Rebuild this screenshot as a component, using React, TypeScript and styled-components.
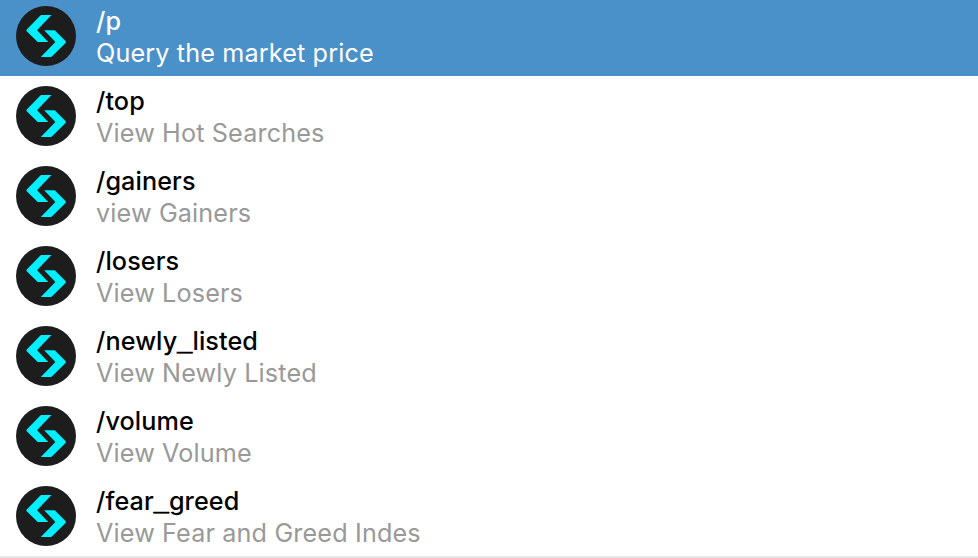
import React from 'react';
import styled, { createGlobalStyle } from 'styled-components';

const GlobalStyle = createGlobalStyle`
  * { box-sizing: border-box; }
  body { margin: 0; background: #fff; overflow: hidden; font-family: Inter, sans-serif; }
`;

const CommandList = styled.ul`
  display: flex;
  flex-direction: column;
  gap: 4px;
  width: 978px;
  height: 558px;
  margin: 0;
  padding: 0;
  list-style: none;
  border-bottom: 2px solid #e7e7e7;
`;

const CommandRow = styled.li<{ $active: boolean }>`
  display: flex;
  flex: 0 0 76px;
  gap: 20px;
  padding: 6px 16px 0;
  color: ${(p) => (p.$active ? '#fff' : '#000')};
  background: ${(p) => (p.$active ? '#4b91c9' : 'transparent')};
`;

const Avatar = styled.svg`
  flex: none;
  width: 60px;
  height: 60px;
`;

const CommandText = styled.div`
  display: flex;
  flex-direction: column;
  margin-top: -1px;
  font-size: 25.2px;
  line-height: 32px;
  white-space: nowrap;
`;

const CommandName = styled.span`
  height: 32px;
  font-weight: 500;
  letter-spacing: 0.1px;
`;

const Underscore = styled.span`
  font-family: "Liberation Sans", sans-serif;
  font-size: 27px;
  font-weight: 700;
  line-height: 0;
  vertical-align: 0.5px;
  -webkit-text-stroke: 0.7px currentColor;
`;

const Description = styled.span<{ $active: boolean }>`
  height: 32px;
  letter-spacing: 0.14px;
  color: ${(p) => (p.$active ? '#fff' : '#999')};
`;

const commands = [
  ['/p', 'Query the market price'],
  ['/top', 'View Hot Searches'],
  ['/gainers', 'view Gainers'],
  ['/losers', 'View Losers'],
  ['/newly_listed', 'View Newly Listed'],
  ['/volume', 'View Volume'],
  ['/fear_greed', 'View Fear and Greed Indes'],
];

const BotAvatar = () => (
  <Avatar viewBox="0 0 60 60" aria-hidden="true">
    <circle cx="30" cy="30" r="30" fill="#1d1d1d" />
    <path
      fill="#00f0ff"
      d="M25.4 9H35.5L21 24.3L32.2 36H21.7L10.7 25.2Q9.8 24.3 10.7 23.4L24.4 9.5Q24.8 9 25.4 9Z"
    />
    <path
      fill="#00f0ff"
      d="M28.2 24.2H38.7L49.5 35.1Q50.4 36 49.5 36.9L35.9 50.6Q35.5 51 34.9 51H24.8L39.4 36Z"
    />
  </Avatar>
);

const CommandLabel = ({ name }: { name: string }) => (
  <CommandName>
    {name.split('_').map((part, index) => (
      <React.Fragment key={part}>
        {index > 0 && <Underscore>_</Underscore>}
        {part}
      </React.Fragment>
    ))}
  </CommandName>
);

export default function App() {
  return (
    <>
      <GlobalStyle />
      <CommandList>
        {commands.map(([name, description], index) => (
          <CommandRow key={name} $active={index === 0}>
            <BotAvatar />
            <CommandText>
              <CommandLabel name={name} />
              <Description $active={index === 0}>{description}</Description>
            </CommandText>
          </CommandRow>
        ))}
      </CommandList>
    </>
  );
}
